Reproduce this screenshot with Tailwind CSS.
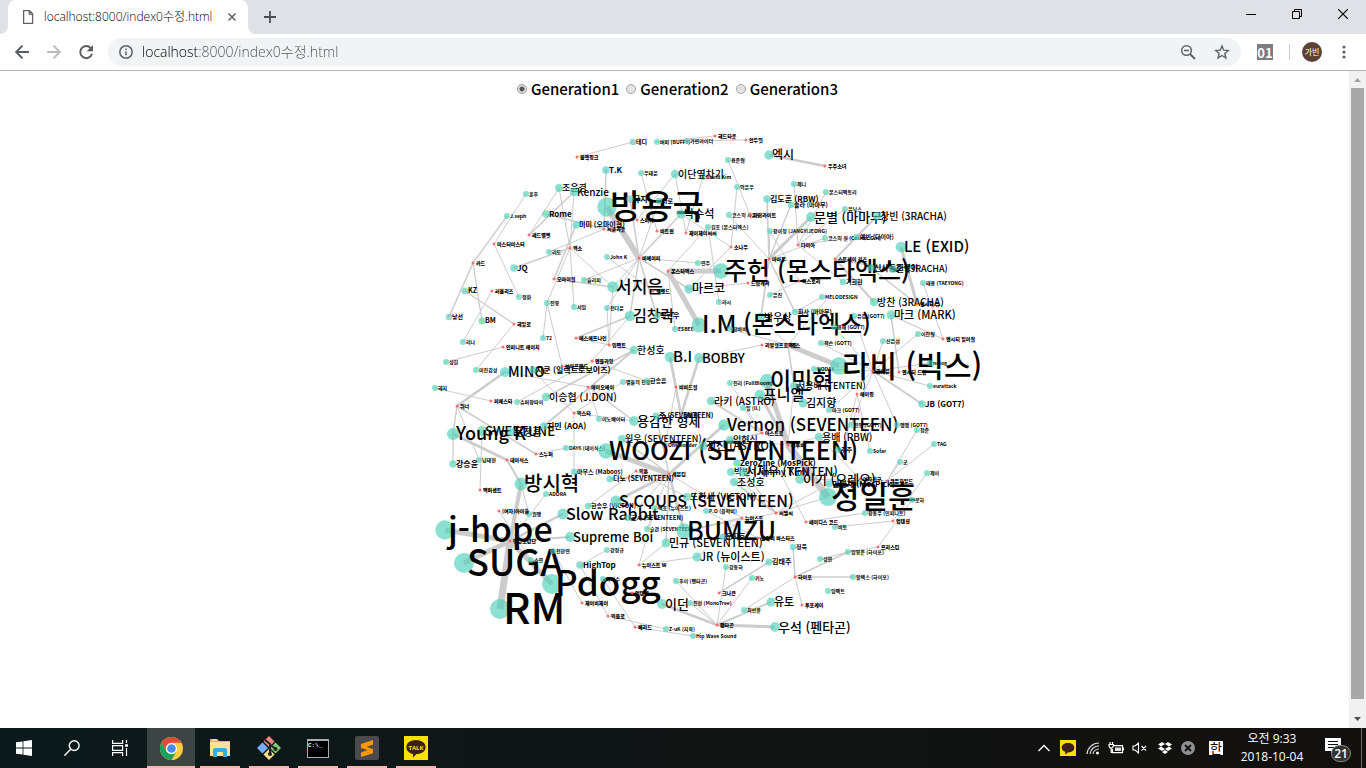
<!DOCTYPE html>
<html lang="ko">
<head>
<meta charset="utf-8">
<title>localhost:8000/index0수정.html</title>
<script src="https://cdn.jsdelivr.net/npm/@tailwindcss/browser@4"></script>
</head>
<body class="flex h-screen flex-col overflow-hidden bg-white font-['Open_Sans','Noto_Sans_CJK_KR',sans-serif] text-black">

<!-- Tab strip -->
<header class="flex h-[34px] shrink-0 items-end bg-[#dee1e6]">
  <div class="relative ml-2 flex h-full w-60 items-center rounded-t-lg bg-white pr-2 pl-3">
    <svg class="size-4 shrink-0" viewBox="0 0 16 16" fill="none" stroke="#5f6368" stroke-width="1.3"><path d="M3.6 1.7h6l3 3v9.6h-9zM9.3 1.7v3.4h3.3"/></svg>
    <span class="ml-2 flex-1 text-xs font-light whitespace-nowrap text-black">localhost:8000/index0수정.html</span>
    <button aria-label="탭 닫기" class="flex size-4 items-center justify-center"><svg class="size-2" viewBox="0 0 8 8" stroke="#5f6368" stroke-width="1.5"><path d="M.5.5l7 7M7.5.5l-7 7"/></svg></button>
    <svg class="absolute bottom-0 -left-2 size-2" viewBox="0 0 8 8"><path d="M8 0v8H0a8 8 0 0 0 8-8z" fill="#fff"/></svg>
    <svg class="absolute -right-2 bottom-0 size-2" viewBox="0 0 8 8"><path d="M0 0v8h8a8 8 0 0 1-8-8z" fill="#fff"/></svg>
  </div>
  <button aria-label="새 탭" class="ml-4 flex h-full items-center"><svg class="size-3" viewBox="0 0 12 12" stroke="#4a4d51" stroke-width="1.8"><path d="M6 0v12M0 6h12"/></svg></button>
  <div class="ml-auto flex h-7 self-start">
    <button aria-label="최소화" class="flex w-[46px] items-center justify-center"><svg class="size-[10px]" viewBox="0 0 10 10" stroke="#000"><path d="M0 5.5h10"/></svg></button>
    <button aria-label="이전 크기로" class="flex w-[46px] items-center justify-center"><svg class="size-[10px]" viewBox="0 0 10 10" fill="none" stroke="#000"><path d="M.5 2.5h7v7h-7zM2.5 2.5v-2h7v7h-2"/></svg></button>
    <button aria-label="닫기" class="flex w-[46px] items-center justify-center"><svg class="size-[10px]" viewBox="0 0 10 10" stroke="#000" stroke-width="1.2"><path d="M0 0l10 10M10 0L0 10"/></svg></button>
  </div>
</header>

<!-- Toolbar -->
<nav class="flex h-[37px] shrink-0 items-center border-b border-[#b3b3b3] bg-white pr-[14px] pl-[14px]">
  <button aria-label="뒤로"><svg class="size-4" viewBox="0 0 16 16" fill="none" stroke="#5a5d61" stroke-width="2"><path d="M15 8H2.5M8.5 1.6L2.2 8l6.3 6.4"/></svg></button>
  <button aria-label="앞으로" class="ml-4"><svg class="size-4" viewBox="0 0 16 16" fill="none" stroke="#babcbe" stroke-width="2"><path d="M1 8h12.5M7.5 1.6L13.8 8l-6.3 6.4"/></svg></button>
  <button aria-label="새로고침" class="ml-4"><svg class="size-4" viewBox="0 0 16 16"><path d="M12.8 4.2A6 6 0 1 0 14 9.8" fill="none" stroke="#5a5d61" stroke-width="2"/><path d="M15 1v6.3H8.7z" fill="#5a5d61"/></svg></button>
  <div class="ml-[14px] flex h-7 flex-1 items-center rounded-full bg-[#f1f3f4] px-[11px]">
    <svg class="size-[14px] shrink-0" viewBox="0 0 14 14" fill="none" stroke="#5f6368" stroke-width="1.5"><circle cx="7" cy="7" r="6.2"/><path d="M7 6.2v4M7 3.5v1.5"/></svg>
    <input aria-label="주소" value="localhost:8000/index0수정.html" class="ml-[9px] min-w-0 flex-1 bg-[linear-gradient(90deg,#000_57px,#4c5054_57px)] bg-clip-text text-sm font-light text-transparent outline-none">
    <button aria-label="축소"><svg class="size-4" viewBox="0 0 16 16" fill="none" stroke="#5f6368" stroke-width="1.5"><circle cx="6.5" cy="6.5" r="4.8"/><path d="M4 6.5h5" /><path d="M10 10l5 5" stroke-width="2"/></svg></button>
    <button aria-label="북마크" class="ml-[18px]"><svg class="size-4" viewBox="0 0 16 16" fill="none" stroke="#5f6368" stroke-width="1.4"><path d="M8 1.9l1.7 4.3 4.6.3-3.5 3 1.1 4.5L8 11.5 4.1 14l1.1-4.5-3.5-3 4.6-.3z"/></svg></button>
  </div>
  <button class="ml-4 h-4 w-4 bg-[#7d7d7d] text-center font-['Noto_Sans_CJK_KR',sans-serif] text-[13px] leading-[15px] font-bold text-white">01</button>
  <span class="ml-4 h-4 w-px bg-[#c8cacd]"></span>
  <button class="ml-3 size-5 rounded-full bg-[#5d4037] font-['Noto_Sans_CJK_KR',sans-serif] text-[8px] leading-5 whitespace-nowrap text-white">가빈</button>
  <button aria-label="메뉴" class="ml-[14px]"><svg class="h-4 w-4" viewBox="0 0 16 16" fill="#5f6368"><circle cx="8" cy="3" r="1.6"/><circle cx="8" cy="8" r="1.6"/><circle cx="8" cy="13" r="1.6"/></svg></button>
</nav>

<div class="flex min-h-0 flex-1">
  <main class="flex min-w-0 flex-1 flex-col items-center overflow-hidden font-['Noto_Sans_CJK_KR',sans-serif]">
    <form class="mt-[6px] ml-[6px] flex h-6 shrink-0 items-center gap-[7px] text-[15px] leading-6 font-medium">
      <label class="flex items-center gap-1"><input type="radio" name="gen" checked class="size-[10px] appearance-none rounded-full border border-[#999] bg-[radial-gradient(circle,#555_2px,#e4e4e4_3px)]">Generation1</label>
      <label class="flex items-center gap-1"><input type="radio" name="gen" class="size-[10px] appearance-none rounded-full border border-[#a5a5a5] bg-[#e2e2e2]">Generation2</label>
      <label class="flex items-center gap-1"><input type="radio" name="gen" class="size-[10px] appearance-none rounded-full border border-[#a5a5a5] bg-[#e2e2e2]">Generation3</label>
    </form>
    <svg id="graph" class="h-[620px] w-[619px] shrink-0" viewBox="365 101 619 620" role="img" aria-label="작곡가 네트워크">
      <g id="links" stroke="#cccccc" fill="none"></g>
      <g id="nodes"></g>
    </svg>
  </main>
  <aside class="flex w-[17px] shrink-0 flex-col items-center bg-[#f1f1f1]">
    <svg class="h-[17px] w-[17px] shrink-0" viewBox="0 0 17 17"><path d="M5 11h7L8.5 7z" fill="#a3a3a3"/></svg>
    <div class="w-[13px] flex-1 bg-[#a8a8a8]"></div>
    <div class="h-3 shrink-0"></div>
    <svg class="h-[17px] w-[17px] shrink-0" viewBox="0 0 17 17"><path d="M5 6h7l-3.5 4z" fill="#505050"/></svg>
  </aside>
</div>

<!-- Taskbar -->
<footer class="flex h-10 shrink-0 items-stretch bg-[#101716] bg-linear-to-r from-[#0c1a1b] via-[#101514] to-[#12100e] text-white">
  <button aria-label="시작" class="flex w-12 items-center justify-center"><svg class="size-4" viewBox="0 0 16 16" fill="#fff"><path d="M0 2.300l6.600-.9v6.200H0zM7.400 1.300L16 0v7.600H7.400zM0 8.400h6.600v6.200L0 13.700zM7.400 8.400H16V16l-8.600-1.300z"/></svg></button>
  <button aria-label="검색" class="flex w-12 items-center justify-center"><svg class="size-4" viewBox="0 0 16 16" fill="none" stroke="#fff" stroke-width="1.4"><circle cx="10.2" cy="5.6" r="4.9"/><path d="M6.7 9.2L.4 15.6"/></svg></button>
  <button aria-label="작업 보기" class="flex w-12 items-center justify-center"><svg class="size-4" viewBox="0 0 16 16" fill="none" stroke="#fff" stroke-width="1.2"><path d="M.6 0v3.400h10V0M.6 16v-3.400h10V16M.6 5.600h10v4.800H.6zM14.500 0v3M14.500 8v8"/><path d="M13 5.500h3" stroke-width="2.4"/></svg></button>
  <button aria-label="Chrome" class="ml-[3px] flex w-12 items-center justify-center border-b-2 border-[#ffb3ae] bg-[#3c4444] pt-[2px]"><svg class="size-[23px]" viewBox="0 0 24 24"><circle cx="12" cy="12" r="12" fill="#ffcd41"/><path d="M1.600 6A12 12 0 0 1 22.400 6H12a6 6 0 0 0-5.200 9z" fill="#dd4b3e"/><path d="M1.600 6A12 12 0 0 0 12 24l5.200-9A6 6 0 0 1 6.800 15z" fill="#19a15f"/><circle cx="12" cy="12" r="5.7" fill="#fff"/><circle cx="12" cy="12" r="4.5" fill="#4a8af4"/></svg></button>
  <button aria-label="파일 탐색기" class="ml-[5px] flex w-10 items-center justify-center border-b-2 border-[#ffb3ae] pt-[2px]"><svg class="h-5 w-[22px]" viewBox="0 0 22 20"><path d="M1 1h7l2 2h11v15H1z" fill="#e8b93e"/><path d="M1 4h20v14H1z" fill="#ffe395"/><path d="M3 2h5" stroke="#fff8d8"/><path d="M4 19v-8l2-1h10l2 1v8h-4v-5H8v5z" fill="#35aee2"/></svg></button>
  <button aria-label="Git" class="ml-[9px] flex w-10 items-center justify-center border-b-2 border-[#ffb3ae] pt-[2px]"><svg class="size-6" viewBox="0 0 24 24"><path d="M12 0l5.500 5.500L12 11 6.500 5.500z" fill="#f28482"/><path d="M5.500 6.500L11 12l-5.500 5.500L0 12z" fill="#78aef7"/><path d="M18.500 6.500L24 12l-5.500 5.500L13 12z" fill="#7fc96a"/><path d="M12 13l5.500 5.500L12 24l-5.500-5.500z" fill="#ffdf85"/><path d="M8 4l5 4v10M13 9l6 4" stroke="#222" stroke-width="2" fill="none"/><circle cx="13" cy="18" r="2" fill="#222"/><circle cx="18.5" cy="13" r="2" fill="#222"/></svg></button>
  <button aria-label="명령 프롬프트" class="ml-[9px] flex w-10 items-center justify-center border-b-2 border-[#ffb3ae] pt-[2px]"><span class="h-[19px] w-[22px] border border-t-2 border-[#a9adb0] bg-black text-left font-['Liberation_Mono',monospace] text-[6px] leading-[10px] font-bold">C:\_</span></button>
  <button aria-label="Sublime Text" class="ml-[9px] flex w-10 items-center justify-center border-b-2 border-[#ffb3ae] pt-[2px]"><svg class="size-6" viewBox="0 0 24 24"><rect width="24" height="24" rx="2" fill="#4b4b4b"/><path d="M18 4v4.500L11.500 11 18 13v4.200L6 21v-4.500l6.500-2.500L6 12V8z" fill="#ff9800"/></svg></button>
  <button aria-label="카카오톡" class="ml-[9px] flex w-10 items-center justify-center border-b-2 border-[#ffb3ae] pt-[2px]"><svg class="size-6" viewBox="0 0 24 24"><path d="M0 0h24v24H0z" fill="#fae100"/><path d="M12 4c5.500 0 9.600 3 9.600 7.200S17.500 18 12.500 18L9 21.500V18c-4-.8-6.600-3.500-6.600-6.800C2.400 7 6.500 4 12 4z" fill="#3b1e1e"/><text x="12" y="13.5" font-size="6" font-weight="700" text-anchor="middle" fill="#fae100">TALK</text></svg></button>

  <div class="ml-auto flex items-center">
    <svg class="h-3 w-3" viewBox="0 0 12 12" fill="none" stroke="#fff" stroke-width="1.3"><path d="M.5 9L6 3.500 11.500 9"/></svg>
    <svg class="ml-[10px] size-4" viewBox="0 0 16 16"><path d="M0 0h16v16H0z" fill="#fae100"/><path d="M8 3c3.700 0 6.300 2 6.300 4.700S12 12.300 8.500 12.300L5 14.500l.4-2.700C3 11 1.700 9.600 1.700 7.700 1.700 5 4.300 3 8 3z" fill="#3b1e1e"/></svg>
    <svg class="ml-[10px] h-[14px] w-[14px]" viewBox="0 0 14 14" fill="none" stroke="#ddd" stroke-width="1.2"><path d="M1 13A12 12 0 0 1 13 2M4 13a9 9 0 0 1 9-8M7 13a6 6 0 0 1 6-5"/><circle cx="11.5" cy="12" r="1.5" fill="#fff" stroke="none"/></svg>
    <svg class="ml-2 h-[14px] w-4" viewBox="0 0 16 14" fill="none" stroke="#fff" stroke-width="1.2"><path d="M5.500 4.600h9v7h-10V8M2 1v2M4.500 1v2M1 3.500h4.500c0 3-1 3.500-2.300 3.500S1 6.500 1 3.500zM3.200 7v4.500H5M15.500 6.500v3"/><path d="M7 6.500h6v3.500H7z" fill="#ddd" stroke="none"/></svg>
    <svg class="ml-2 h-3 w-4" viewBox="0 0 16 12" fill="none" stroke="#fff" stroke-width="1.1"><path d="M1 4h2l3.500-3v10L3 8H1zM9.500 4l4.500 4.500M14 4L9.500 8.500"/></svg>
    <svg class="ml-[9px] h-[14px] w-4" viewBox="0 0 16 14" fill="#fff"><path d="M5 1l3 2-4 2.500-3-2zM11 1l4 2.500-3 2L8 3zM1 7.500l3-2L8 8l-3 2zM12 5.500l3 2-4 2.500-3-2zM8 9l3 2-3 2-3-2z"/></svg>
    <svg class="ml-2 size-[14px]" viewBox="0 0 14 14"><circle cx="7" cy="7" r="7" fill="#8f9191"/><path d="M4 4l6 6M10 4l-6 6" stroke="#111" stroke-width="1.8"/></svg>
    <span class="ml-[14px] size-[14px] bg-white text-center font-['Noto_Sans_CJK_KR',sans-serif] text-[13px] leading-[13px] text-black">한</span>
    <div class="ml-[14px] w-[70px] text-center text-xs leading-[18px] whitespace-nowrap"><div>오전 9:33</div><div>2018-10-04</div></div>
    <button aria-label="알림" class="relative ml-[18px] size-7">
      <svg class="absolute top-1 left-0 h-4 w-4" viewBox="0 0 16 16"><path d="M0 0h16v13h-7l-3 3v-3H0z" fill="#fff"/><path d="M3 3.500h10M3 6.500h10M3 9.500h10" stroke="#111"/></svg>
      <span class="absolute top-[11px] left-[6px] h-[17px] w-5 rounded-full border border-[#888] bg-[#333] text-xs leading-[15px] font-semibold">21</span>
    </button>
    <span class="mr-1 ml-2 h-10 w-px bg-[#6c6c6c]"></span>
  </div>
</footer>

<script>
// Links: x1, y1, x2, y2, width
const links = [
[577,157,633,142,1],[657,142,715,136,1],[687,141,746,140,1],[769,155,825,166,2.5],[606,170,604,229,1.5],
[641,173,657,231,1],[675,174,637,220,1],[675,174,686,233,1],[703,177,686,233,1],[559,188,529,235,1],[574,192,529,235,1.5],[559,188,570,248,1],[574,192,570,248,1],
[607,207,639,258,6],[681,214,639,258,1.5],[630,199,639,258,1.5],[659,201,639,258,1],[526,194,494,244,1],[507,216,473,263,1.3],[494,244,519,297,1],
[546,214,604,229,1.3],[604,229,549,252,1],[570,248,514,268,1.5],[570,248,547,303,1],[570,248,574,307,1],[570,248,613,287,1],[576,225,554,279,1.5],[554,279,613,287,1.5],
[639,258,584,280,1],[639,258,698,263,1],[639,258,689,289,1.5],[639,258,613,287,1],[639,258,630,316,1.5],[639,258,607,308,1],[639,258,657,316,1.5],
[668,271,721,271,5],[668,271,699,325,5],[668,271,708,227,1],[668,271,675,329,1],[607,257,653,291,1],[681,214,731,247,1],[731,247,737,187,1],[728,160,750,215,1],[731,247,689,289,1],
[719,302,708,227,1],[473,263,449,317,1.5],[473,263,482,321,1.3],[465,291,514,324,1.3],[492,291,463,342,1],[514,324,476,370,1],[503,347,446,362,1],[547,303,543,338,1],
[630,316,576,338,1.5],[630,316,592,361,1],[607,308,609,345,1],[576,338,634,350,1],[609,345,613,287,1],[634,350,546,397,1.8],[634,350,544,426,1.8],
[592,361,647,381,1],[592,361,517,402,1],[562,366,547,303,1],[533,370,574,413,1],[505,372,457,406,2.5],[505,372,588,387,1],[588,387,634,421,1.5],[588,387,599,419,1],[623,382,574,413,1],
[574,413,574,472,1],[574,413,634,421,1],[435,388,491,401,1],[457,406,453,434,1.5],[457,406,479,460,1],[457,406,536,454,1.5],[453,434,507,460,3],[453,434,453,464,1.3],[536,454,566,448,1],[507,460,521,484,2],[482,431,480,490,1],
[670,357,681,415,2.5],[699,358,681,415,2.5],[670,357,676,387,2],[676,387,665,445,1],
[606,451,669,474,5],[622,439,669,474,1.5],[610,479,669,474,1.5],[616,501,669,474,3],[724,425,669,474,3],[684,531,669,474,2.5],[666,543,669,474,1.5],[647,529,669,474,1],[656,416,669,474,1.3],[628,518,669,474,1],[588,506,636,471,1],[687,497,636,471,1],[669,474,742,518,1],
[521,484,510,541,4],[445,530,510,541,5],[464,563,510,541,5],[552,584,510,541,5],[500,609,510,541,7],[563,514,510,541,2.5],[570,537,510,541,2],[521,484,529,514,1],[499,511,531,560,1],[546,494,510,541,1],
[582,603,553,551,1],[580,565,608,616,1],[603,579,635,627,1],[607,550,580,565,1],[608,616,666,629,1],[635,627,693,636,1],
[639,565,666,543,1],[639,565,655,508,1],[639,565,697,557,1],[697,557,742,518,1],[684,531,742,518,1.5],[684,531,776,513,1],[706,511,758,538,1],[723,537,758,538,1],
[662,604,717,625,2.5],[676,581,717,625,1],[690,603,717,625,1],[717,625,775,627,3],[717,625,771,602,2],[717,625,752,578,1],[717,625,726,567,1],[744,610,795,577,1],[719,593,769,562,1.5],
[793,547,795,577,1.5],[795,577,802,605,1],[795,577,853,577,1.5],[795,577,848,552,1.5],[820,559,848,552,1],[848,552,878,547,1],[878,547,912,500,1],[893,521,835,527,1],[893,521,927,473,1],[806,522,865,513,1],[806,522,776,465,1],
[776,513,737,463,1],[776,513,731,472,1],[776,513,743,472,1],[776,513,734,482,2],[776,513,829,484,1],[776,513,828,497,1],
[788,445,828,497,7],[788,445,767,381,5],[788,445,760,395,3],[788,445,794,386,1],[788,445,819,437,1],[788,445,730,440,1],[762,433,711,401,1.5],[762,433,703,446,1.5],[762,433,730,383,1],[762,433,743,408,1],
[788,345,839,366,5],[788,345,761,317,1],[788,345,794,386,1.5],[762,345,699,358,1],[788,345,730,329,1],[788,345,826,300,1],
[769,259,767,199,1.5],[769,259,791,205,1.3],[769,259,811,217,3],[769,259,795,312,1.5],[769,259,761,317,1.8],[769,259,729,215,1],[769,259,825,238,1],[769,259,770,231,1],
[798,245,794,184,1],[798,245,826,192,1],[798,245,857,237,1],[798,245,843,282,1],[798,245,845,209,1],[799,281,770,295,1],[799,281,770,231,1],[748,283,689,289,1],[822,297,795,312,1],
[835,259,877,216,2],[835,259,893,269,2],[835,259,874,302,2],[901,247,917,304,3],[871,268,917,304,1.5],[923,283,943,339,1],[891,315,943,339,1.3],[891,315,899,372,1.5],[883,341,873,371,1],[918,334,873,371,1],
[873,371,854,316,1],[873,371,834,327,1],[873,371,821,343,1],[873,371,814,369,1],[873,371,930,363,1],[873,371,930,386,1],[873,371,922,404,2],[873,371,829,410,1],[873,371,851,425,1],[873,371,897,425,1],
[857,394,843,450,1],[857,394,870,451,1],[860,479,819,437,1],[887,481,917,430,1],[887,481,934,444,1],[887,481,900,462,1],[887,481,800,479,1]
];
// Producers: x, y, label size, name
const people = [
[633,142,6,"테디"],[657,142,5,"버피 (BUFFY)"],[687,141,5,"가면라이더"],[606,170,8,"T.K"],[641,173,5,"우태운"],[703,177,5,"David Kim"],[675,174,10,"이단옆차기"],[559,188,9,"조윤경"],[574,192,10,"Kenzie"],
[607,207,34,"방용국"],[630,199,8,"뮤지"],[659,201,6,"라로"],[681,214,11,"박수석"],[526,194,5,"훈후"],[507,216,5,"J.seph"],[546,214,8,"Rome"],[576,225,7,"미미 (오마이걸)"],[549,252,5,"리도"],[708,227,5,"원호 (몬스타엑스)"],
[514,268,8,"JQ"],[607,257,5,"John K"],[698,263,5,"연주"],[584,280,5,"슬리피"],[613,287,17,"서지음"],[465,291,7,"KZ"],[519,297,5,"정화"],[547,303,5,"진영"],[574,307,5,"서임"],[607,308,5,"전다운"],[689,289,12,"마르코"],[449,317,6,"낯선"],[482,321,7,"BM"],[630,316,15,"김창락"],[657,316,7,"박현우"],
[769,155,12,"엑시"],[728,160,5,"용준형"],[737,187,5,"박은우"],[794,184,5,"제니"],[826,192,5,"몬스터팩토리"],[767,199,8,"김도훈 (RBW)"],[791,205,6,"솔라 (마마무)"],[811,217,13,"문별 (마마무)"],[845,209,5,"유닉스"],[877,216,10,"창빈 (3RACHA)"],[729,215,5,"코스믹 사운드"],[770,231,5,"장이정 (JANGYIJEONG)"],[825,238,5,"코스믹 걸 (Cosmic Girl)"],[857,237,6,"예빈 (다이아)"],[901,247,15,"LE (EXID)"],[721,271,25,"주헌 (몬스타엑스)"],[871,268,8,"신사동호랭이"],[893,269,9,"한 (3RACHA)"],[843,282,6,"기희현"],[923,283,5,"태용 (TAEYONG)"],[719,302,5,"라시"],[770,295,5,"은진"],[822,297,5,"MELODESIGN"],[795,312,6,"화사 (마마무)"],[874,302,10,"방찬 (3RACHA)"],[891,315,11,"마크 (MARK)"],[854,316,5,"유겸 (GOT7)"],[761,317,10,"박우상"],
[463,342,5,"리나"],[543,338,5,"72"],[675,329,5,"ESBEE"],[699,325,24,"I.M (몬스타엑스)"],[634,350,10,"한성호"],[670,357,15,"B.I"],[699,358,13,"BOBBY"],[446,362,5,"성원"],[476,370,5,"미친감성"],[505,372,14,"MINO"],[533,370,8,"차쿤 (일렉트로보이즈)"],[623,382,5,"별들의 전쟁"],[647,381,6,"한승훈"],[435,388,5,"헤지"],[517,402,5,"슈퍼창따이"],[546,397,10,"이승협 (J.DON)"],[599,419,5,"이노베이터"],[634,421,13,"용감한 형제"],[656,416,7,"준 (SEVENTEEN)"],[711,401,10,"라키 (ASTRO)"],[482,431,13,"SWEETUNE"],[511,432,10,"문정훈"],[453,434,18,"Young K"],[544,426,8,"지민 (AOA)"],[566,448,5,"DAY6 (데이식스)"],[622,439,9,"원우 (SEVENTEEN)"],[665,445,5,"Onewonder"],[479,460,5,"남태현"],[453,464,8,"강승윤"],[606,451,25,"WOOZI (SEVENTEEN)"],[521,484,20,"방시혁"],[574,472,6,"마부스 (Maboos)"],[610,479,7,"디노 (SEVENTEEN)"],[703,446,11,"진진 (ASTRO)"],
[730,329,5,"한바비"],[834,327,5,"영재 (GOT7)"],[821,343,5,"잭슨 (GOT7)"],[883,341,5,"신은섭"],[918,334,5,"이찬형"],[814,369,5,"NODAY"],[767,381,23,"이민혁"],[839,366,30,"라비 (빅스)"],[930,363,5,"nolog"],[930,386,5,"eurattack"],[794,386,9,"서용배 (TENTEN)"],[760,395,15,"프니엘"],[803,403,11,"김지향"],[730,383,5,"진리 (FullBloom)"],[743,408,5,"일 (IL)"],[829,410,5,"마크 (GOT7)"],[922,404,8,"JB (GOT7)"],[724,425,17,"Vernon (SEVENTEEN)"],[851,425,5,"진영 (GOT7)"],[897,425,5,"뱀뱀 (GOT7)"],[917,430,5,"정준"],[934,444,5,"TAG"],[819,437,10,"용배 (RBW)"],[730,440,9,"임현식"],[870,451,5,"Sofar"],[900,462,5,"군"],[927,473,5,"제이"],[838,450,6,"주주"],[737,463,8,"ZeroZine (MosPick)"],[731,472,9,"박빈 (Jimmy Kim)"],[743,472,12,"서재우 (TENTEN)"],[734,482,10,"조성호"],[800,479,13,"이기 (오레오)"],[829,484,8,"민연재 (MosPick)"],[828,497,31,"정일훈"],
[546,494,5,"ADORA"],[529,514,5,"권맹"],[563,514,16,"Slow Rabbit"],[570,537,13,"Supreme Boi"],[445,530,34,"j-hope"],[464,563,36,"SUGA"],[552,584,35,"Pdogg"],[500,609,42,"RM"],[588,506,6,"한승우 (VICTON)"],[616,501,16,"S.COUPS (SEVENTEEN)"],[628,518,6,"호시 (SEVENTEEN)"],[655,508,5,"백호 (뉴이스트)"],[687,497,9,"도한세 (VICTON)"],[647,529,5,"승관 (SEVENTEEN)"],[684,531,25,"BUMZU"],[666,543,11,"민규 (SEVENTEEN)"],[697,557,11,"JR (뉴이스트)"],[706,511,5,"P.O (블락비)"],[607,550,5,"강정규"],[580,565,8,"HighTop"],[553,551,5,"전한연"],[531,560,5,"소연"],[603,579,5,"하디수"],[662,604,13,"이던"],[676,581,5,"후이 (펜타곤)"],[690,603,5,"진현 (MonoTree)"],[666,629,5,"Z-uK (지욱)"],[693,636,5,"Hip Wave Sound"],
[865,513,5,"장동우 (인피니트)"],[835,527,5,"비토"],[912,500,5,"로하"],[723,537,7,"문지효"],[793,547,6,"정욱"],[769,562,7,"김태주"],[820,559,5,"성연"],[848,552,5,"임영준 (하이포)"],[726,567,5,"강동하"],[752,578,5,"키노"],[853,577,5,"알렉스 (하이포)"],[828,591,5,"임팩트"],[771,602,11,"유토"],[744,610,5,"최선윤"],[775,627,13,"우석 (펜타곤)"]
];
// Groups: x, y, name
const groups = [
[577,157,"블랙핑크"],[715,136,"헤드타운"],[746,140,"언두잇"],[825,166,"우주소녀"],[637,220,"스피카"],[604,229,"씨클라운"],[529,235,"레드벨벳"],[494,244,"미스터미스터"],[473,263,"카드"],[570,248,"엑소"],[657,231,"비트윈"],[686,233,"제이제이씨씨"],[639,258,"비에이피"],[668,271,"몬스타엑스"],[554,279,"오마이걸"],[492,291,"러블리즈"],[653,291,"로맨드"],[750,215,"하이라이트"],[731,247,"소나무"],[798,245,"다이아"],[769,259,"마마무"],[835,259,"스트레이 키즈"],[748,283,"드림캐쳐"],[799,281,"히스토리"],[917,304,"엔시티 유"],[514,324,"헤일로"],[503,347,"인피니트 에이치"],[576,338,"에스에프나인"],[609,345,"임팩트"],[562,366,"보이프렌드"],[592,361,"엔플라잉"],[588,387,"에이오에이"],[676,387,"비비드걸"],[491,401,"피에스타"],[457,406,"위너"],[574,413,"빅스타"],[681,415,"아이콘"],[536,454,"스누퍼"],[507,460,"데이식스"],[636,471,"빅톤"],[669,474,"세븐틴"],[480,490,"백퍼센트"],[943,339,"엔시티 일이칠"],[762,345,"리얼걸프로젝트"],[788,345,"빅스"],[873,371,"갓세븐"],[899,372,"엔시티 드림"],[857,394,"에이핑"],[762,433,"아스트로"],[788,445,"비투비"],[860,479,"여자친구"],[887,481,"골든차일드"],[499,511,"(여자)아이들"],[510,541,"방탄소년단"],[639,565,"뉴이스트 W"],[632,593,"업텐션"],[582,603,"제이비제이"],[608,616,"빅플로"],[635,627,"베리드"],[717,625,"펜타곤"],[742,518,"뉴이스트"],[776,513,"씨엘씨"],[806,522,"레이디스 코드"],[893,521,"업텐션"],[758,538,"블락비 바스타즈"],[878,547,"프리스틴"],[795,577,"하이포"],[719,593,"크나큰"],[802,605,"투포케이"]
];
const make = (tag, attrs, parent, text) => {
  const el = document.createElementNS("http://www.w3.org/2000/svg", tag);
  for (const k in attrs) el.setAttribute(k, attrs[k]);
  if (text) el.textContent = text;
  parent.appendChild(el);
};
const linkLayer = document.getElementById("links");
const nodeLayer = document.getElementById("nodes");
for (const [x1, y1, x2, y2, w] of links) make("line", {x1, y1, x2, y2, "stroke-width": w}, linkLayer);
for (const [x, y, s, name] of people) {
  make("circle", {cx: x, cy: y, r: Math.min(10, 1.9 + 0.23 * s), fill: "#4fd0b8", "fill-opacity": 0.65}, nodeLayer);
  make("text", {x: x + 3, y: y + s * 0.35, "font-size": s, "font-weight": s < 9 ? 700 : 500}, nodeLayer, name);
}
for (const [x, y, name] of groups) {
  make("circle", {cx: x, cy: y, r: 1.5, fill: "#ff5a5a", "fill-opacity": 0.85}, nodeLayer);
  make("text", {x: x + 3, y: y + 2, "font-size": 5, "font-weight": 900}, nodeLayer, name);
}
</script>
</body>
</html>
